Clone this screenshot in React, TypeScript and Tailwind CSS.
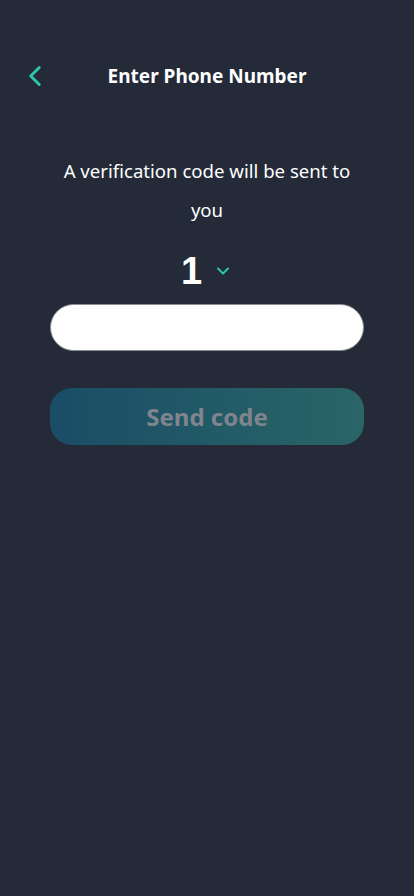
import { ChevronLeft, ChevronDown } from "lucide-react";

export default function App() {
  return (
    <div
      className="min-h-screen w-full bg-[#242a38] pt-[63px] text-white"
      style={{ fontFamily: '"Noto Sans", "Open Sans", sans-serif' }}
    >
      {/* Header */}
      <header className="relative flex h-[26px] items-center justify-center">
        <button className="absolute left-[18px] top-1/2 -translate-y-1/2 text-[#2ec4ac]">
          <ChevronLeft size={34} strokeWidth={2.1} />
        </button>
        <h1 className="text-[19px] font-bold leading-[26px]">Enter Phone Number</h1>
      </header>

      <main className="flex flex-col items-center px-[50px]">
        <p className="mt-[62px] w-[310px] text-center text-[18.6px] leading-[39px]">
          A verification code will be sent to you
        </p>

        <button className="mt-[23px] flex items-center gap-[11px]">
          <span
            className="text-[38px] font-bold leading-none"
            style={{ fontFamily: '"Liberation Sans", Arial, sans-serif' }}
          >
            1
          </span>
          <ChevronDown size={20} strokeWidth={2.4} className="text-[#2ec4ac]" />
        </button>

        <input
          type="tel"
          className="mt-[14px] h-[47px] w-full rounded-full border border-[#8a8d93] bg-white px-5 text-[18px] text-gray-900 outline-none"
        />

        <button className="mt-[37px] flex h-[57px] w-full items-center justify-center rounded-[22px] bg-gradient-to-r from-[#1a4d66] to-[#2a6567] text-[24px] font-bold text-[#80858d]">
          Send code
        </button>
      </main>
    </div>
  );
}
